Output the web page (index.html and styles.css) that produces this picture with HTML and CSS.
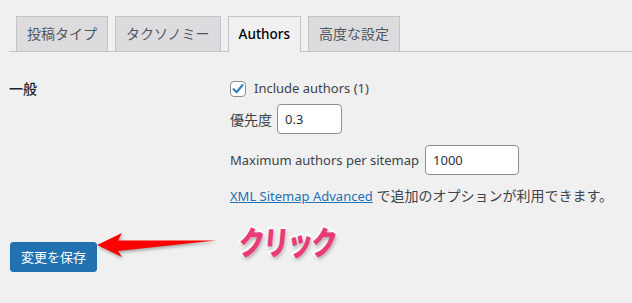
FILE: index.html
```html
<!DOCTYPE html>
<html lang="ja">
<head>
<meta charset="utf-8">
<link rel="stylesheet" href="styles.css">
</head>
<body>
<div class="page">
  <nav class="tabs">
    <a class="tab">投稿タイプ</a>
    <a class="tab">タクソノミー</a>
    <a class="tab active"><span class="en">Authors</span></a>
    <a class="tab">高度な設定</a>
  </nav>
  <div class="form">
    <div class="th">一般</div>
    <div class="td">
      <label class="row check-row">
        <span class="checkbox"><svg viewBox="0 0 16 16" width="16" height="16"><path d="M3.6 8.2 L6.6 11.3 L12.4 4.2" fill="none" stroke="#3582c4" stroke-width="2.2" stroke-linecap="round" stroke-linejoin="round"/></svg></span>
        <span class="en">Include authors (1)</span>
      </label>
      <div class="row r2"><span>優先度</span><span class="input w-small en">0.3</span></div>
      <div class="row r3"><span class="en">Maximum authors per sitemap</span><span class="input w-big en">1000</span></div>
      <div class="row r4"><a class="link en">XML Sitemap Advanced</a> で追加のオプションが利用できます。</div>
    </div>
  </div>
  <div class="actions">
    <span class="button">変更を保存</span>
  </div>
  <svg class="arrow" width="130" height="30" viewBox="0 0 130 30">
    <path d="M2 15 L27 3 L23 10.5 L121 10.6 L23 21 L27 27 Z" fill="#ff0000"/>
  </svg>
  <div class="click">クリック</div>
</div>
</body>
</html>
```
FILE: styles.css
```css
html, body {
  margin: 0;
  padding: 0;
  background: #f0f0f1;
}
body {
  font-family: "Noto Sans", "Noto Sans CJK JP", sans-serif;
  font-size: 14px;
  color: #3c434a;
}
.en {
  font-size: 13px;
}
.page {
  position: relative;
  width: 632px;
  height: 303px;
  padding-left: 9px;
  box-sizing: border-box;
}
.tabs {
  display: flex;
  padding-top: 16px;
  border-bottom: 1px solid #c3c4c7;
  height: 35px;
  align-items: flex-end;
}
.tab {
  display: block;
  margin-left: 7px;
  padding: 5px 10px;
  font-size: 14px;
  line-height: 24px;
  height: 24px;
  border: 1px solid #c3c4c7;
  border-bottom: none;
  background: #dcdcde;
  color: #50575e;
  font-weight: 400;
}
.tab .en {
  font-size: 13.5px;
  font-weight: 500;
}
.tab.active {
  background: #f0f0f1;
  color: #000;
  margin-bottom: -1px;
  padding-bottom: 6px;
}
.form {
  display: flex;
  padding-top: 26px;
}
.th {
  width: 221px;
  color: #1d2327;
  font-weight: 500;
  line-height: 21px;
  flex: none;
}
.td {
  display: flex;
  flex-direction: column;
  line-height: 21px;
}
.row {
  display: flex;
  align-items: center;
}
.check-row {
  gap: 8px;
}
.checkbox {
  width: 14px;
  height: 14px;
  border: 1px solid #8c8f94;
  border-radius: 4px;
  background: #fff;
  position: relative;
}
.checkbox svg {
  position: absolute;
  left: -1px;
  top: -1px;
}
.r2 { margin-top: 5px; gap: 5px; }
.r3 { margin-top: 11px; gap: 6px; }
.r4 { margin-top: 10px; display: block; }
.input {
  display: block;
  box-sizing: border-box;
  height: 30px;
  line-height: 28px;
  border: 1px solid #8c8f94;
  border-radius: 4px;
  background: #fff;
  padding: 0 7px;
  color: #2c3338;
}
.w-small { width: 65px; }
.w-big { width: 94px; }
.link {
  color: #2271b1;
  text-decoration: underline;
}
.actions {
  padding-top: 35px;
}
.button {
  display: inline-block;
  box-sizing: border-box;
  height: 30px;
  line-height: 28px;
  padding: 0 10px;
  margin-left: 1px;
  background: #2271b1;
  border: 1px solid #2271b1;
  border-radius: 3px;
  color: #fff;
  font-size: 13px;
}
.arrow {
  position: absolute;
  left: 95px;
  top: 230px;
  filter: drop-shadow(1px 2px 1.5px rgba(0,0,0,0.3));
}
.click {
  position: absolute;
  left: 241px;
  top: 219px;
  font-family: "Noto Sans CJK JP", sans-serif;
  font-weight: 900;
  font-size: 33px;
  line-height: 44px;
  color: #ea3a77;
  -webkit-text-stroke: 4px #fff;
  paint-order: stroke fill;
  text-shadow: 1px 2px 4px rgba(0,0,0,0.35);
  letter-spacing: -2px;
  transform-origin: left top;
  transform: scaleX(0.78) skewX(-6deg);
}
```
